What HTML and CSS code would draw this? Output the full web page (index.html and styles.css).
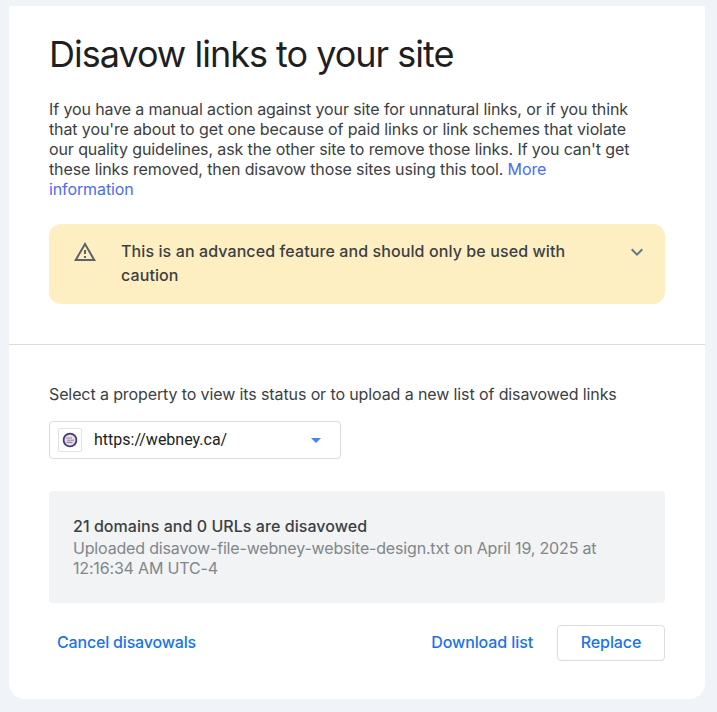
FILE: index.html
```html
<!DOCTYPE html>
<html lang="en">
<head>
<meta charset="utf-8">
<title>Disavow links to your site</title>
<link rel="stylesheet" href="styles.css">
</head>
<body>
<main class="card">
  <section class="intro">
    <h1 class="title">Disavow links to your site</h1>
    <p class="desc">If you have a manual action against your site for unnatural links, or if you think that you're about to get one because of paid links or link schemes that violate our quality guidelines, ask the other site to remove those links. If you can't get these links removed, then disavow those sites using this tool. <a class="more" href="#">More information</a></p>
    <div class="warning">
      <svg class="warn-icon" viewBox="0 0 24 24" width="24" height="24"><path fill="#5f6368" d="M12 5.99 19.53 19H4.47L12 5.99M12 2 1 21h22L12 2zm1 14h-2v2h2v-2zm0-6h-2v4h2v-4z"/></svg>
      <div class="warn-text">This is an advanced feature and should only be used with caution</div>
      <svg class="chev" viewBox="0 0 24 24" width="24" height="24"><path fill="#5f7a8a" d="M7.41 8.59 12 13.17l4.59-4.58L18 10l-6 6-6-6z"/></svg>
    </div>
  </section>
  <hr class="rule">
  <section class="panel">
    <p class="prompt">Select a property to view its status or to upload a new list of disavowed links</p>
    <div class="select">
      <span class="fav">
        <svg viewBox="0 0 16 16" width="16" height="16"><circle cx="8" cy="8" r="6.4" fill="#e2deea" stroke="#3d3a78" stroke-width="1.8"/><path d="M4 6h6M5 8.2h7" stroke="#b87a8c" stroke-width="1"/><path d="M4.5 10.4h6" stroke="#7a78a8" stroke-width="1"/></svg>
      </span>
      <span class="url">https://webney.ca/</span>
      <span class="caret"></span>
    </div>
    <div class="status">
      <div class="status-head">21 domains and 0 URLs are disavowed</div>
      <div class="status-sub">Uploaded disavow-file-webney-website-design.txt on April 19, 2025 at 12:16:34 AM UTC-4</div>
    </div>
    <div class="actions">
      <a class="link cancel" href="#">Cancel disavowals</a>
      <a class="link" href="#">Download list</a>
      <button class="btn" type="button">Replace</button>
    </div>
  </section>
</main>
</body>
</html>
```
FILE: styles.css
```css
* { box-sizing: border-box; }
html, body { height: 100%; }
body {
  margin: 0;
  background: #f0f4f9;
  padding: 6px 12px 13px 9px;
  font-family: "Inter", "Liberation Sans", sans-serif;
  color: #1f1f1f;
  overflow: hidden;
}
.card {
  height: 693px;
  background: #fff;
  border-radius: 0 0 16px 16px;
}
.intro { padding: 23px 40px 0; height: 338px; }
.title {
  margin: 0;
  font-size: 36px;
  line-height: 50px;
  font-weight: 400;
  letter-spacing: -1px;
}
.desc {
  margin: 20px 0 0;
  max-width: 583px;
  font-size: 16px;
  line-height: 20px;
  letter-spacing: -0.11px;
  color: #3c4043;
}
.more { color: #4a6cf7; text-decoration: none; }
.warning {
  margin-top: 25px;
  height: 80px;
  background: #feefc3;
  border-radius: 12px;
  display: flex;
  align-items: flex-start;
  padding: 15px 16px 0 24px;
}
.warn-icon { flex: none; margin: 1px 24px 0 0; }
.warn-text {
  flex: 1;
  font-size: 16px;
  line-height: 24px;
  font-weight: 500;
  letter-spacing: 0.1px;
  color: #3c4043;
  max-width: 460px;
}
.chev { flex: none; margin: 1px 0 0 auto; }
.rule { margin: 0; border: 0; border-top: 1px solid #dadce0; }
.panel { padding: 0 40px; }
.prompt {
  margin: 39px 0 0;
  font-size: 16px;
  line-height: 20px;
  letter-spacing: -0.11px;
  color: #3c4043;
}
.select {
  margin-top: 17px;
  width: 292px;
  height: 38px;
  border: 1px solid #dadce0;
  border-radius: 4px;
  display: flex;
  align-items: center;
  padding: 0 19px 0 8px;
}
.fav {
  width: 24px;
  height: 24px;
  border: 1px solid #e3e3e3;
  border-radius: 2px;
  display: flex;
  align-items: center;
  justify-content: center;
  margin-right: 12px;
}
.url {
  flex: 1;
  font-family: "Roboto", sans-serif;
  font-size: 16px;
  line-height: 18px;
  margin-top: -1px;
  color: #202124;
}
.caret {
  width: 0;
  height: 0;
  border-left: 5px solid transparent;
  border-right: 5px solid transparent;
  border-top: 5px solid #4285f4;
}
.status {
  margin-top: 32px;
  height: 112px;
  background: #f1f3f4;
  border-radius: 4px;
  padding: 25px 24px 0;
}
.status-head { font-size: 16px; line-height: 20px; font-weight: 500; letter-spacing: 0.05px; color: #3c4043; }
.status-sub { margin-top: 2px; font-size: 16px; line-height: 20px; letter-spacing: -0.17px; color: #80868b; }
.actions {
  margin-top: 22px;
  display: flex;
  align-items: center;
  padding-left: 8px;
  gap: 24px;
}
.link { color: #1a73e8; text-decoration: none; font-size: 16px; line-height: 18px; margin-top: -2px; font-weight: 500; letter-spacing: -0.1px; }
.cancel { margin-right: auto; letter-spacing: -0.18px; }
.btn {
  width: 108px;
  height: 36px;
  background: #fff;
  border: 1px solid #dadce0;
  border-radius: 4px;
  color: #1a73e8;
  font: 500 16px "Inter", "Liberation Sans", sans-serif;
  letter-spacing: -0.1px;
  padding: 0 0 2px;
}
```
